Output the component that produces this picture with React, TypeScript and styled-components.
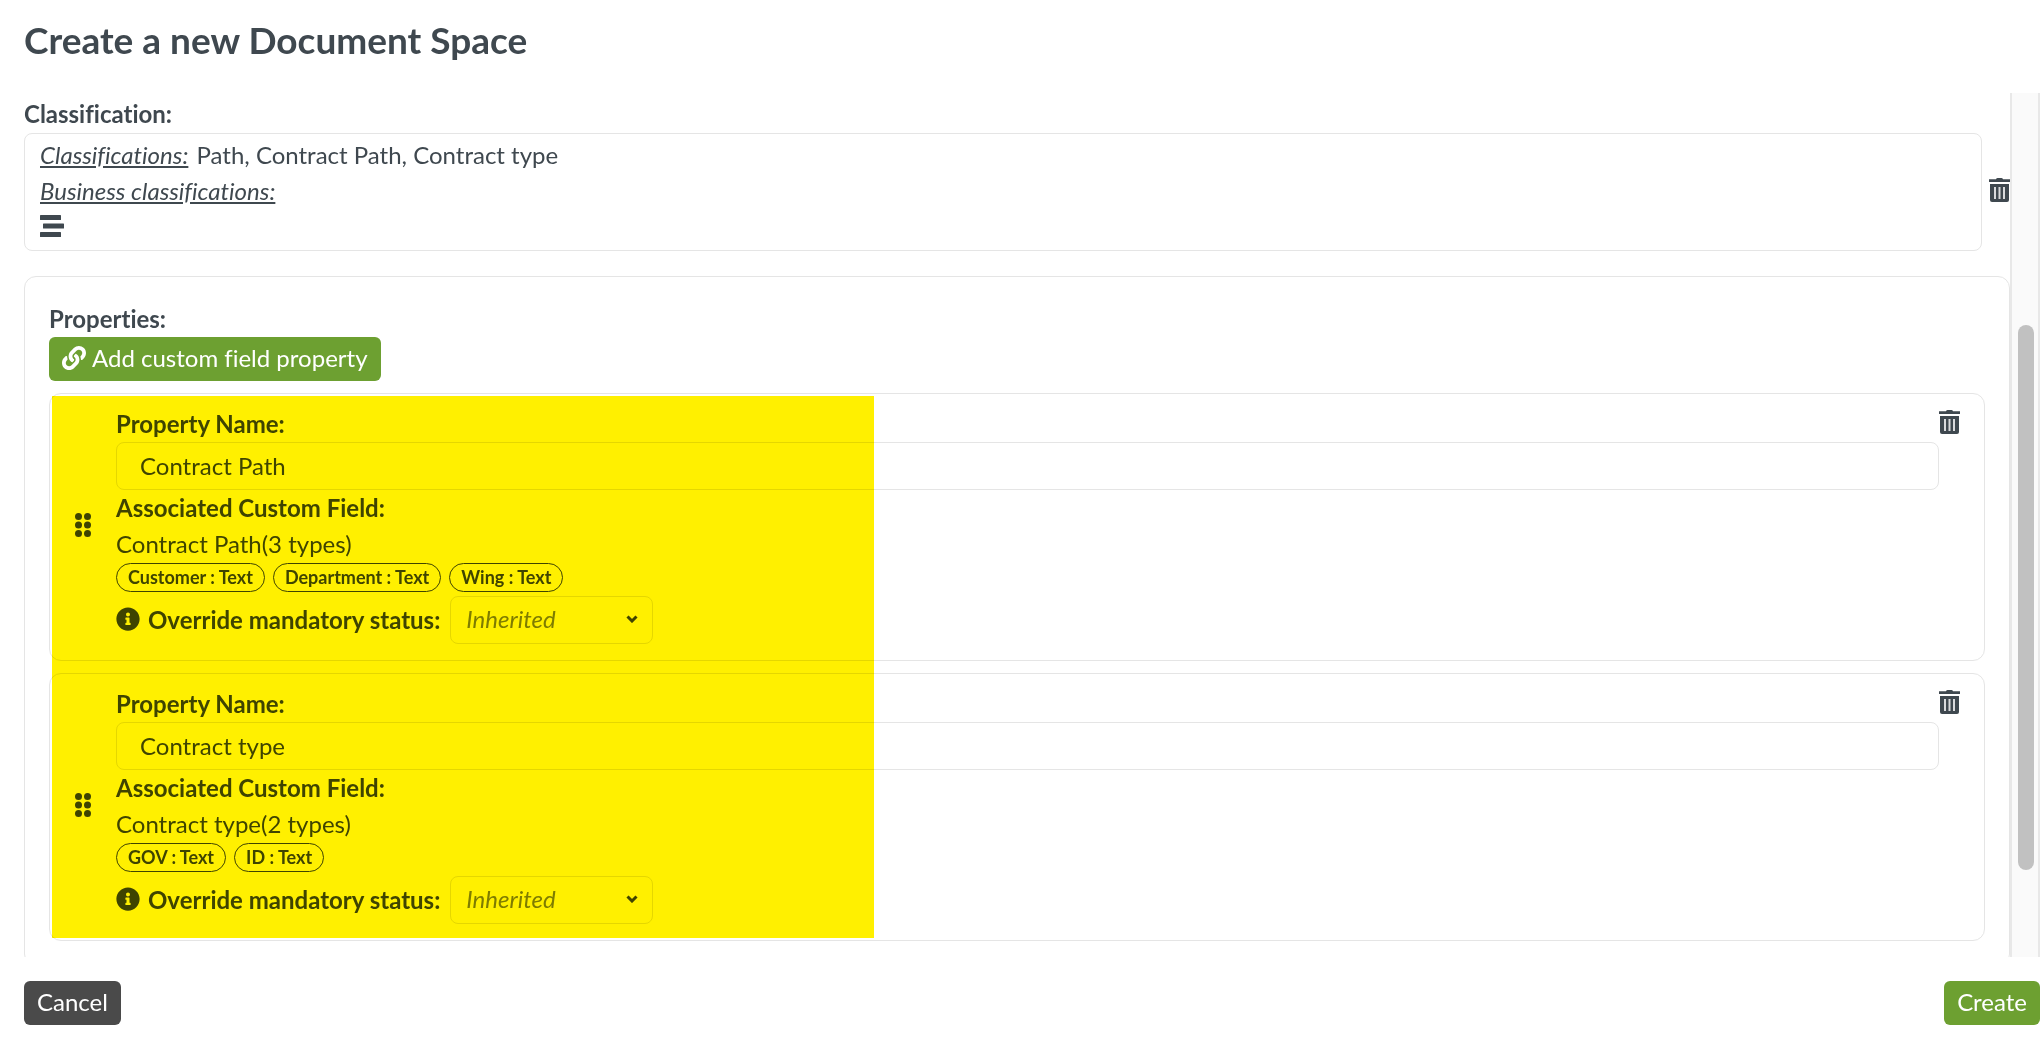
import React from 'react';
import styled, { createGlobalStyle } from 'styled-components';
import { FaLink, FaInfoCircle } from 'react-icons/fa';

const ink = '#3f484f';
const line = '#e5e5e5';
const green = '#6da031';
const sans = 'Lato, "Open Sans", sans-serif';

const GlobalStyle = createGlobalStyle`
  *, *::before, *::after { box-sizing: border-box; }
  body {
    margin: 0;
    background: #fff;
    color: ${ink};
    font: 24px/36px ${sans};
    font-variant-ligatures: none;
  }
  button, input, select { font: inherit; font-variant-ligatures: none; color: inherit; }
`;

const Dialog = styled.main`
  display: flex;
  flex-direction: column;
  height: 100vh;
  background: #fff;
`;

const Header = styled.header`
  padding: 18px 24px 31px;
`;

const Title = styled.h1`
  margin: 0;
  font-size: 37px;
  line-height: 44px;
  font-weight: 700;
`;

const Viewport = styled.div`
  flex: 1;
  min-height: 0;
  display: flex;
  padding-right: 4px;
`;

const Content = styled.div`
  flex: 1;
  min-width: 0;
  overflow: hidden;
  padding: 3px 0 0 24px;
`;

const Track = styled.div`
  flex: none;
  width: 30px;
  padding: 232px 4px 0 6px;
  background: #fafafa;
  border: solid #e8e8e8;
  border-width: 0 2px;
`;

const Thumb = styled.div`
  width: 16px;
  height: 545px;
  border-radius: 8px;
  background: #c1c1c1;
`;

const Heading = styled.div`
  font-weight: 700;
`;

const FieldLabel = styled.label`
  display: block;
  font-weight: 700;
`;

const ClassificationRow = styled.div`
  display: flex;
  align-items: center;
  gap: 7px;
  margin: 1px 0 25px;
`;

const ClassificationBox = styled.div`
  flex: 1;
  padding: 3px 15px 5px;
  border: 1px solid ${line};
  border-radius: 8px;
`;

const Term = styled.span`
  margin-right: 2px;
  font-style: italic;
  text-decoration: underline;
`;

const IconButton = styled.button`
  flex: none;
  display: flex;
  padding: 0;
  border: 0;
  background: none;
`;

const RowDelete = styled(IconButton)`
  padding-bottom: 4px;
`;

const TreeButton = styled(IconButton)`
  height: 36px;
  padding-top: 6px;
`;

const Panel = styled.section`
  padding: 24px;
  border: 1px solid ${line};
  border-radius: 12px;
`;

const Button = styled.button<{ $tone: 'green' | 'dark' }>`
  display: inline-flex;
  align-items: center;
  gap: 6px;
  height: 44px;
  padding: 0 13px 2px;
  border: 0;
  border-radius: 6px;
  color: #fff;
  background: ${(p) => (p.$tone === 'green' ? green : '#4a4a4a')};
`;

const PropertyList = styled.div`
  position: relative;
  display: grid;
  gap: 12px;
  margin-top: 12px;
`;

const Marker = styled.div`
  position: absolute;
  inset: 3px auto 3px 3px;
  width: 822px;
  background: #fff000;
  mix-blend-mode: multiply;
  pointer-events: none;
`;

const Card = styled.article`
  display: flex;
  padding: 12px 24px 16px;
  border: 1px solid ${line};
  border-radius: 12px;
`;

const Handle = styled(IconButton)`
  align-self: center;
  width: 18px;
  margin-right: 24px;
`;

const CardBody = styled.div`
  flex: 1;
  min-width: 0;
`;

const CardDelete = styled(IconButton)`
  align-self: flex-start;
  padding-top: 4px;
`;

const TextInput = styled.input`
  display: block;
  width: 100%;
  height: 48px;
  padding: 0 23px 2px;
  border: 1px solid ${line};
  border-radius: 8px;
  background: #fff;
  outline: 0;
`;

const Badges = styled.div`
  display: flex;
  gap: 8px;
  height: 34px;
  padding-top: 1px;
`;

const Badge = styled.span`
  height: 29px;
  padding: 0 11px;
  border: 1px solid ${ink};
  border-radius: 15px;
  font-size: 18px;
  line-height: 26px;
  font-weight: 700;
`;

const StatusRow = styled.div`
  display: flex;
  align-items: center;
  gap: 8px;
  > svg { margin-bottom: 3px; }
`;

const SelectWrap = styled.div`
  display: grid;
  align-items: center;
  width: 203px;
  margin-left: 2px;
  > * { grid-area: 1 / 1; }
  > svg { justify-self: end; margin: 0 15px 3px 0; pointer-events: none; }
`;

const Select = styled.select`
  appearance: none;
  width: 100%;
  height: 48px;
  padding: 0 15px 2px;
  border: 1px solid ${line};
  border-radius: 8px;
  background: #fff;
  color: #7e8488;
  font-style: italic;
`;

const Footer = styled.footer`
  display: flex;
  justify-content: space-between;
  padding: 24px 4px 17px 24px;
`;

const Trash = () => (
  <svg width="21" height="24" viewBox="0 0 21 24" aria-hidden="true">
    <path fill={ink} d="M7 1.2Q7.4 0 8.6 0h3.8Q13.600 0 14 1.200H21V4H0V1.200Z" />
    <path fill={ink} d="M1 6H20V22Q20 24 18 24H3Q1 24 1 22Z" />
    <path fill="#d9dadc" d="M5 9h2v12H5zM9.500 9h2v12h-2zM14 9h2v12h-2z" />
  </svg>
);

const Tree = () => (
  <svg width="24" height="22" viewBox="0 0 24 22" aria-hidden="true" fill={ink}>
    <rect width="21" height="5" rx="0.600" />
    <rect x="3" y="8.500" width="21" height="5" rx="0.600" />
    <rect y="17" width="21" height="5" rx="0.600" />
  </svg>
);

const Dots = () => (
  <svg width="18" height="24" viewBox="0 0 18 24" aria-hidden="true" fill={ink}>
    {[3.5, 12, 20.5].map((y) => (
      <g key={y}>
        <circle cx="4.500" cy={y} r="3.500" />
        <circle cx="13.500" cy={y} r="3.500" />
      </g>
    ))}
  </svg>
);

const Chevron = () => (
  <svg width="12" height="8" viewBox="0 0 12 8" aria-hidden="true">
    <path d="M1.500 1.500 6 6 10.500 1.500" fill="none" stroke={ink} strokeWidth="3" />
  </svg>
);

type Property = { id: string; name: string; types: string[] };

const properties: Property[] = [
  { id: 'path', name: 'Contract Path', types: ['Customer', 'Department', 'Wing'] },
  { id: 'type', name: 'Contract type', types: ['GOV', 'ID'] },
];

const PropertyCard = ({ id, name, types }: Property) => (
  <Card>
    <Handle type="button" aria-label="Reorder"><Dots /></Handle>
    <CardBody>
      <FieldLabel htmlFor={`${id}-name`}>Property Name:</FieldLabel>
      <TextInput id={`${id}-name`} defaultValue={name} />
      <Heading>Associated Custom Field:</Heading>
      <div>{`${name}(${types.length} types)`}</div>
      <Badges>
        {types.map((t) => <Badge key={t}>{`${t} : Text`}</Badge>)}
      </Badges>
      <StatusRow>
        <FaInfoCircle size={24} color={ink} />
        <FieldLabel htmlFor={`${id}-status`}>Override mandatory status:</FieldLabel>
        <SelectWrap>
          <Select id={`${id}-status`} defaultValue="inherited">
            <option value="inherited">Inherited</option>
          </Select>
          <Chevron />
        </SelectWrap>
      </StatusRow>
    </CardBody>
    <CardDelete type="button" aria-label={`Delete ${name}`}><Trash /></CardDelete>
  </Card>
);

export default function App() {
  return (
    <>
      <GlobalStyle />
      <Dialog>
        <Header><Title>Create a new Document Space</Title></Header>
        <Viewport>
          <Content>
            <Heading>Classification:</Heading>
            <ClassificationRow>
              <ClassificationBox>
                <div><Term>Classifications:</Term> Path, Contract Path, Contract type</div>
                <div><Term>Business classifications:</Term></div>
                <TreeButton type="button" aria-label="Show tree"><Tree /></TreeButton>
              </ClassificationBox>
              <RowDelete type="button" aria-label="Delete classification"><Trash /></RowDelete>
            </ClassificationRow>
            <Panel>
              <Heading>Properties:</Heading>
              <Button type="button" $tone="green"><FaLink size={24} />Add custom field property</Button>
              <PropertyList>
                {properties.map((p) => <PropertyCard key={p.id} {...p} />)}
                <Marker />
              </PropertyList>
            </Panel>
          </Content>
          <Track><Thumb /></Track>
        </Viewport>
        <Footer>
          <Button type="button" $tone="dark">Cancel</Button>
          <Button type="button" $tone="green">Create</Button>
        </Footer>
      </Dialog>
    </>
  );
}
